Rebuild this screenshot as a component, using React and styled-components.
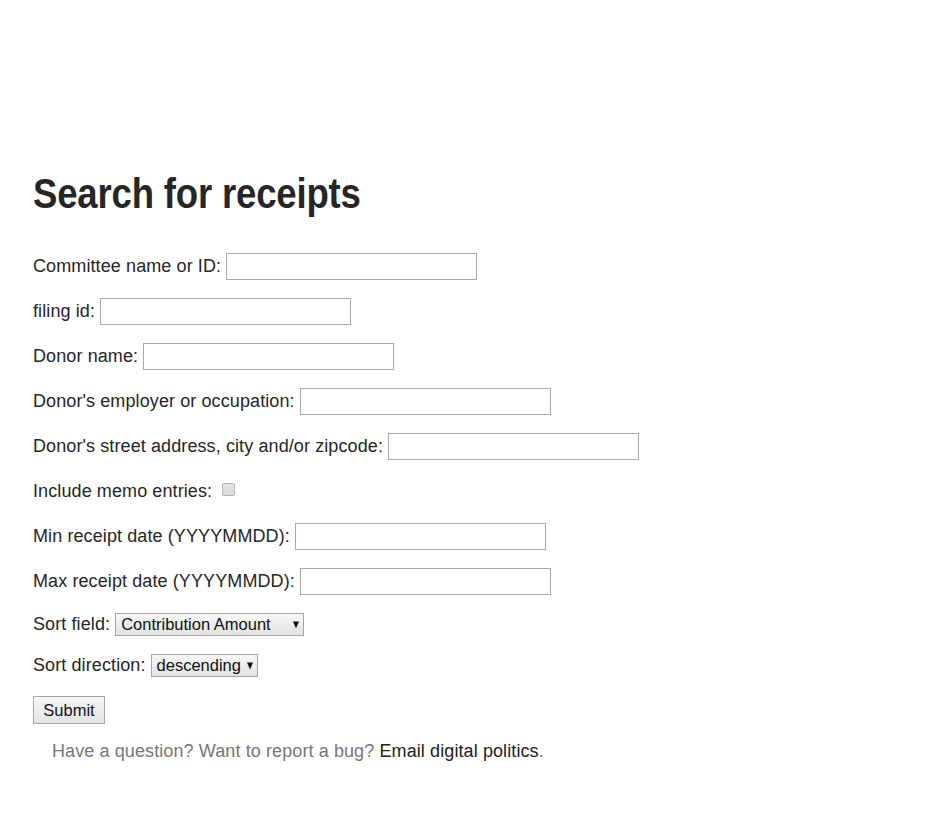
import React from "react";
import styled, { createGlobalStyle } from "styled-components";

const Global = createGlobalStyle`
  html, body { margin: 0; padding: 0; background: #fff; }
  body { font-family: "Liberation Sans", Arial, sans-serif; color: #262626; }
`;

const Page = styled.div`
  padding: 160px 0 40px 33px;
`;

const Title = styled.h1`
  font-family: "Liberation Sans", Arial, sans-serif;
  font-weight: 700;
  font-size: 42px;
  line-height: 68px;
  height: 68px;
  margin: 0 0 25px 0;
  color: #262626;
  letter-spacing: -0.2px;
`;

const TitleText = styled.span`
  display: inline-block;
  transform: scaleX(0.87);
  transform-origin: left center;
  white-space: nowrap;
`;

const Form = styled.form`
  display: flex;
  flex-direction: column;
  gap: 18px;
  align-items: flex-start;
`;

const Row = styled.div`
  display: flex;
  align-items: center;
  height: ${(p) => p.$h || 27}px;
  font-size: 18px;
  letter-spacing: 0.1px;
`;

const Label = styled.label`
  margin-right: 5px;
  white-space: nowrap;
`;

const TextInput = styled.input`
  box-sizing: border-box;
  width: 251px;
  height: 27px;
  border: 1px solid #a9a9a9;
  padding: 2px 4px;
  font-size: 15px;
  font-family: "Liberation Sans", Arial, sans-serif;
  background: #fff;
  margin: 0;
  outline: none;
`;

const Check = styled.input`
  appearance: none;
  box-sizing: border-box;
  width: 13px;
  height: 13px;
  margin: 0 0 4px 5px;
  border: 1px solid #b5b5b5;
  border-radius: 2px;
  background: linear-gradient(#e4e4e4, #d9d9d9);
`;

const SelectBox = styled.div`
  position: relative;
  display: inline-flex;
  align-items: center;
  box-sizing: border-box;
  width: ${(p) => p.$w}px;
  height: 23px;
  border: 1px solid #a6a6a6;
  background: linear-gradient(#f7f7f7, #e3e3e3);
  font-size: 16.5px;
  letter-spacing: 0;
  color: #111;
  padding-left: 5px;
  font-family: "Liberation Sans", Arial, sans-serif;
`;

const Arrow = styled.span`
  position: absolute;
  right: 4px;
  top: 50%;
  transform: translateY(-50%);
  width: 0;
  height: 0;
  border-left: 3.5px solid transparent;
  border-right: 3.5px solid transparent;
  border-top: 7px solid #111;
`;

const Button = styled.button`
  box-sizing: border-box;
  height: 28px;
  width: 72px;
  margin-top: 1px;
  border: 1px solid #a6a6a6;
  background: linear-gradient(#f7f7f7, #e3e3e3);
  font-size: 16.5px;
  color: #111;
  font-family: "Liberation Sans", Arial, sans-serif;
  padding: 0;
`;

const Footer = styled.p`
  margin: 16px 0 0 19px;
  font-size: 18px;
  line-height: 22px;
  letter-spacing: 0.1px;
  color: #777;
`;

const FooterLink = styled.a`
  color: #222;
  text-decoration: none;
`;

const fields = [
  "Committee name or ID:",
  "filing id:",
  "Donor name:",
  "Donor's employer or occupation:",
  "Donor's street address, city and/or zipcode:",
];

export default function App() {
  return (
    <>
      <Global />
      <Page>
        <Title>
          <TitleText>Search for receipts</TitleText>
        </Title>
        <Form onSubmit={(e) => e.preventDefault()}>
          {fields.map((f) => (
            <Row key={f}>
              <Label>{f}</Label>
              <TextInput type="text" />
            </Row>
          ))}
          <Row>
            <Label>Include memo entries:</Label>
            <Check type="checkbox" />
          </Row>
          <Row>
            <Label>Min receipt date (YYYYMMDD):</Label>
            <TextInput type="text" />
          </Row>
          <Row>
            <Label>Max receipt date (YYYYMMDD):</Label>
            <TextInput type="text" />
          </Row>
          <Row $h={23}>
            <Label>Sort field:</Label>
            <SelectBox $w={189}>
              Contribution Amount
              <Arrow />
            </SelectBox>
          </Row>
          <Row $h={23}>
            <Label>Sort direction:</Label>
            <SelectBox $w={107}>
              descending
              <Arrow />
            </SelectBox>
          </Row>
          <Button type="submit">Submit</Button>
        </Form>
        <Footer>
          Have a question? Want to report a bug?{" "}
          <FooterLink href="#">Email digital politics</FooterLink>.
        </Footer>
      </Page>
    </>
  );
}
